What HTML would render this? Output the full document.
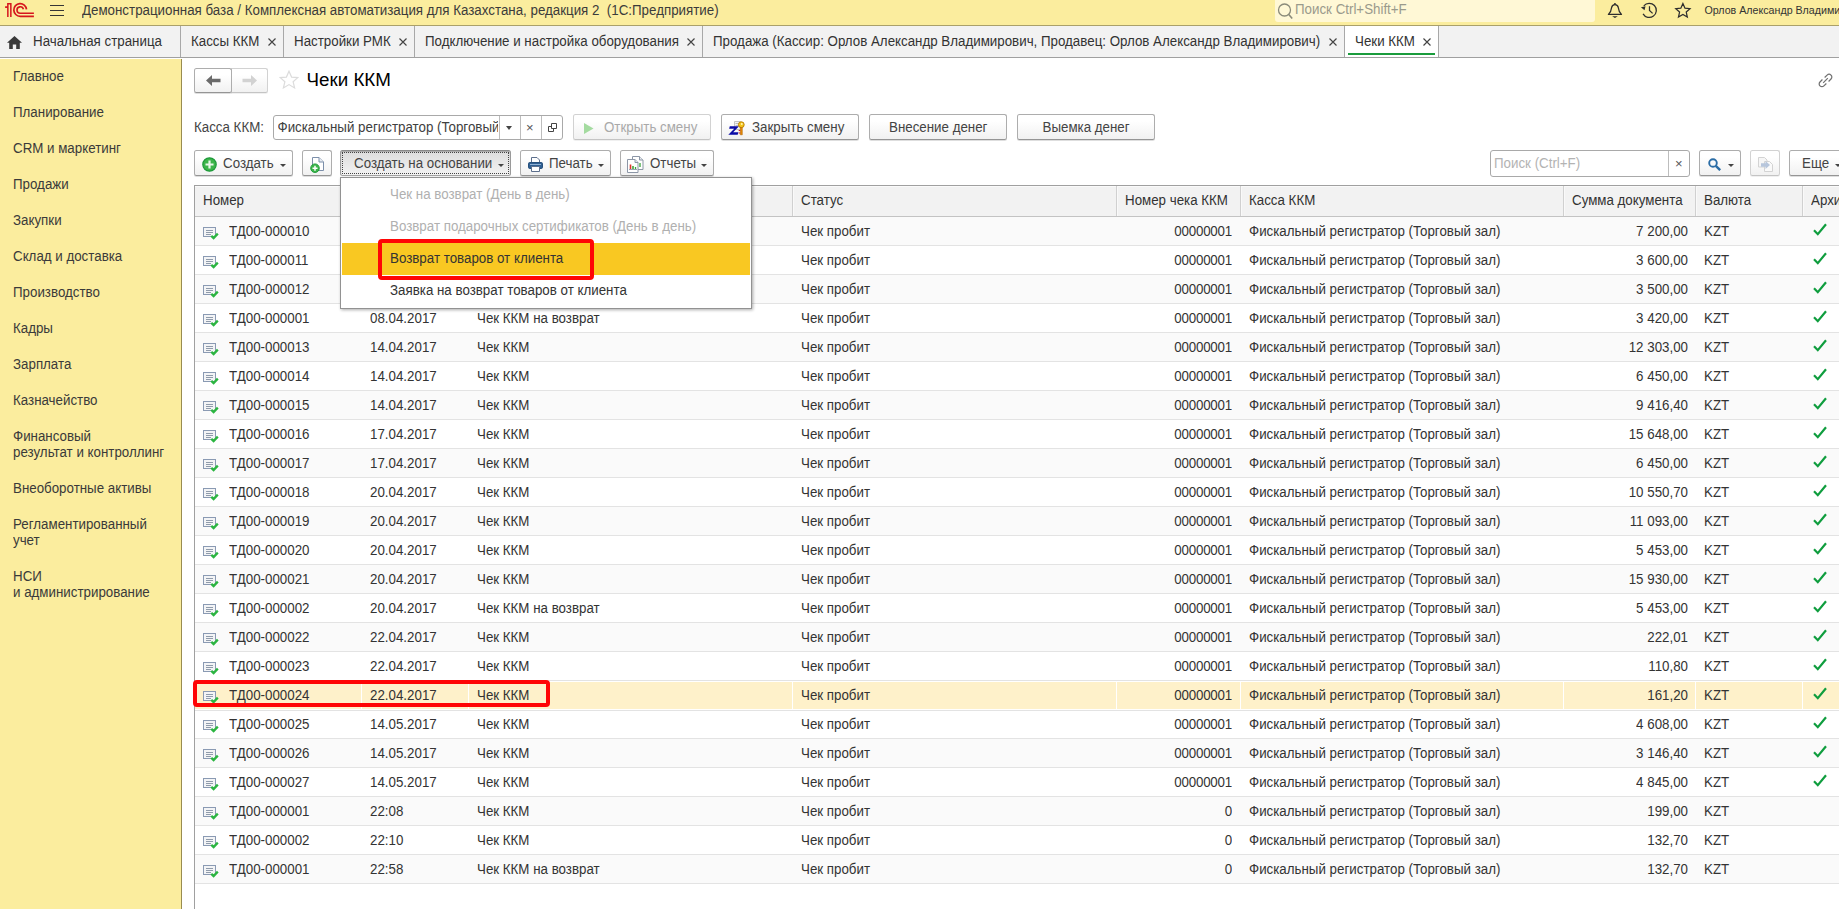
<!DOCTYPE html>
<html lang="ru"><head><meta charset="utf-8"><title>Чеки ККМ</title>
<style>
*{box-sizing:border-box;margin:0;padding:0}
html,body{width:1839px;height:909px;overflow:hidden;background:#fff}
body{font-family:"Liberation Sans",sans-serif;font-size:14px;color:#333;position:relative;-webkit-font-smoothing:antialiased}
.abs{position:absolute}
.s{display:inline-block;transform:scaleY(1.07);transform-origin:0 calc(50% + 4.6px)}
#top{position:absolute;left:0;top:0;width:1839px;height:26px;background:#fbed9e;border-bottom:1px solid #aaa06a}
#top .ttl{position:absolute;left:82px;top:2px;font-size:13.33px;line-height:18px;color:#3b3b3b;white-space:pre}
#top .srch{position:absolute;left:1275px;top:0;width:320px;height:22px;background:#fff8d6;border-radius:0 0 3px 3px}
#top .srch span{position:absolute;left:20px;top:1px;font-size:13.33px;line-height:18px;color:#9a9a8c}
#top .usr{position:absolute;left:1704.5px;top:2px;font-size:10.67px;line-height:16px;color:#333;white-space:nowrap;transform:scaleY(1.07);transform-origin:0 calc(50% + 3.7px)}
#tabs{position:absolute;left:0;top:26px;width:1839px;height:32px;background:#f2f2f2;border-bottom:1px solid #a0a0a0}
#tabs .t{position:absolute;top:0;height:31px;font-size:13.33px;line-height:31px;color:#333;white-space:nowrap;border-right:1px solid #a8a8a8}
#tabs .t .x{position:absolute;top:12px}
#tabs .t.act{background:#fff;height:31px}
#tabs .t.act i{position:absolute;left:3px;right:3px;top:27px;height:2px;background:#1a9c3c}
#side{position:absolute;left:0;top:59px;width:182px;height:850px;background:#fbed9e;border-right:1px solid #998c50}
#side div{position:absolute;left:13px;font-size:13.33px;line-height:16px;color:#3a3a3a;white-space:nowrap;transform:scaleY(1.07);transform-origin:0 calc(50% + 4.6px)}
.btn{position:absolute;height:26px;border:1px solid #adadad;border-bottom-color:#959595;border-radius:2.5px;background:linear-gradient(#fff 25%,#f1f1f1);box-shadow:0 1px 0 rgba(0,0,0,.13);font-size:13.33px;line-height:23px;color:#444;white-space:nowrap;text-align:center}
.btn.dis{color:#a9a9a9;border-color:#d2d2d2;border-bottom-color:#c4c4c4;box-shadow:0 1px 0 rgba(0,0,0,.06)}
.btn.prs{background:linear-gradient(#dcdcdc,#f3f3f3);border-color:#8a8a8a #9a9a9a #a5a5a5;box-shadow:inset 0 1px 1px rgba(0,0,0,.25)}
.btn svg{position:absolute}
.btn .tx{position:absolute;top:1px;transform:scaleY(1.07);transform-origin:0 calc(50% + 4.6px)}
.btn .ar{position:absolute;top:13px;width:0;height:0;border-left:3.5px solid transparent;border-right:3.5px solid transparent;border-top:3.5px solid #444}
.arr{display:inline-block;width:0;height:0;border-left:3.5px solid transparent;border-right:3.5px solid transparent;border-top:4px solid #444;vertical-align:middle;margin-left:7px;position:relative;top:1px}
.inp{position:absolute;height:25px;border:1px solid #a9a9a9;border-radius:3px;background:#fff;font-size:13.33px;line-height:23px;color:#404040;white-space:nowrap;overflow:hidden}
#title{position:absolute;left:306.500px;top:68px;font-size:18.8px;line-height:24px;color:#000;white-space:nowrap}
#tbl{position:absolute;left:194px;top:185px;width:1645px;height:724px;border-left:1px solid #a0a0a0;border-top:1px solid #a0a0a0}
#hdr{position:absolute;left:195px;top:186px;width:1644px;height:31px;background:#f2f2f2;border-bottom:1px solid #c3c3c3;border-top:1px solid #fafafa}
#hdr span{position:absolute;top:0;font-size:13.33px;line-height:27px;color:#333;white-space:nowrap;transform:scaleY(1.07);transform-origin:0 calc(50% + 4.6px)}
#hdr i{position:absolute;top:-1px;width:2px;height:30px;border-left:1px solid #d0d0d0;background:#f9f9f9}
#rows .r{position:absolute;left:195px;width:1644px;height:29px;border-bottom:1px solid #e3e3e3;background:#fff}
#rows .r.alt{background:#fafafa}
#rows .r.sel{background:#fff}
#rows .r.sel u{position:absolute;left:0;top:1px;width:100%;height:27px;background:#fef1ca}
#rows .w{position:absolute;left:0;top:0;width:100%;height:29px}
#rows .c{position:absolute;top:0;transform:scaleY(1.07);transform-origin:0 calc(50% + 4.6px);font-size:13.33px;line-height:30px;color:#333;white-space:nowrap;}
#rows .di{position:absolute;left:8px;top:10px}
#rows .ck{position:absolute;left:1618px;top:6px}
.c1{left:34px}.c2{left:175px}.c3{left:282px}.c4{left:606px}.c5{right:607px;letter-spacing:-.2px}.c6{left:1054px}.c7{right:151px}.c8{left:1509px}
#rows .sel b{position:absolute;top:1px;width:1px;height:27px;background:#fff}
#menu{position:absolute;left:340px;top:177px;width:412px;height:132px;background:#fff;border:1px solid #929292;box-shadow:1px 1px 3px rgba(0,0,0,.33)}
#menu div{position:absolute;left:1px;width:408px;height:32px;font-size:13.33px;line-height:32px;padding-left:48px;color:#333;white-space:nowrap}
#menu div.dis{color:#b0b0b0}
#menu div.hl{background:#f9c822}
.red{position:absolute;border:4px solid #ff0505;border-radius:4px}

</style></head>
<body>
<div id="top">
<svg class="abs" style="left:0;top:0" width="40" height="22" viewBox="0 0 40 22"><g fill="none" stroke="#d6151d" stroke-width="1.700"><path d="M7.850 17V3.700h3V17" stroke-width="1.500"/><path d="M5.100 7.100h2.800"/><path d="M26.500 9.300A6.350 6.350 0 1 0 20.150 16.300H33.900"/><path d="M23.400 9.300A3.250 3.250 0 1 0 20.150 13.300H33.900" stroke-width="1.600"/></g></svg>
<svg class="abs" style="left:50px;top:4px" width="14" height="13" viewBox="0 0 14 13"><path d="M0 1.500h14M0 6.500h14M0 11.500h14" stroke="#353535" stroke-width="1.200"/></svg>
<span class="ttl s">Демонстрационная база / Комплексная автоматизация для Казахстана, редакция 2  (1С:Предприятие)</span>
<div class="srch"><svg class="abs" style="left:2px;top:2px" width="17" height="18" viewBox="0 0 17 18"><circle cx="7.5" cy="8" r="6" fill="none" stroke="#8b8b7a" stroke-width="1.3"/><path d="M11.8 12.6l3.4 4" stroke="#8b8b7a" stroke-width="1.6"/></svg><span class="s">Поиск Ctrl+Shift+F</span></div>
<svg class="abs" style="left:1600px;top:0" width="100" height="24" viewBox="0 0 100 24"><g fill="none" stroke="#2e2e2e" stroke-width="1.250"><path d="M8.400 14.400C10.500 12.500 11.300 10.500 11.600 7.600C11.900 5.400 13.300 4.500 14.950 4.500C16.600 4.500 18 5.400 18.300 7.600C18.600 10.500 19.400 12.500 21.500 14.400Z" stroke-linejoin="round"/><path d="M14.950 3v1.500" stroke-width="1.500"/><path d="M43.800 5.800A7.100 7.100 0 1 1 43.050 13.850"/><path d="M49.500 6.200v4.200l3.100 3"/><path d="M82.90 3.50L84.96 8.17L90.03 8.68L86.23 12.08L87.31 17.07L82.90 14.50L78.49 17.07L79.57 12.08L75.77 8.68L80.84 8.17Z"/></g><path d="M12.100 16.200h5.700l-2.850 1.800z" fill="#2e2e2e"/><path d="M40.900 7.200l4.600-.9-1 4z" fill="#2e2e2e"/></svg>
<span class="usr">Орлов Александр Владимирович</span>
</div>
<div id="tabs">
<div class="t" style="left:0;width:181px;padding-left:33px"><svg class="abs" style="left:7px;top:10px" width="15" height="13" viewBox="0 0 15 13"><path d="M7.500 0L0 6.800h2.200V13h3.600V8.500h3.400V13h3.600V6.800H15z" fill="#3a3a3a"/></svg><span class="s">Начальная страница</span></div>
<div class="t" style="left:181px;width:103px;padding-left:10px"><span class="s">Кассы ККМ</span><svg class="x" style="left:86.5px" width="8" height="8" viewBox="0 0 8 8"><path d="M0.500 0.500l7 7M7.500 0.500l-7 7" stroke="#444" stroke-width="1.150" fill="none"/></svg></div>
<div class="t" style="left:284px;width:131px;padding-left:10px"><span class="s">Настройки РМК</span><svg class="x" style="left:114.5px" width="8" height="8" viewBox="0 0 8 8"><path d="M0.500 0.500l7 7M7.500 0.500l-7 7" stroke="#444" stroke-width="1.150" fill="none"/></svg></div>
<div class="t" style="left:415px;width:288px;padding-left:10px"><span class="s">Подключение и настройка оборудования</span><svg class="x" style="left:271.5px" width="8" height="8" viewBox="0 0 8 8"><path d="M0.500 0.500l7 7M7.500 0.500l-7 7" stroke="#444" stroke-width="1.150" fill="none"/></svg></div>
<div class="t" style="left:703px;width:642px;padding-left:10px"><span class="s">Продажа (Кассир: Орлов Александр Владимирович, Продавец: Орлов Александр Владимирович)</span><svg class="x" style="left:625.7px" width="8" height="8" viewBox="0 0 8 8"><path d="M0.500 0.500l7 7M7.500 0.500l-7 7" stroke="#444" stroke-width="1.150" fill="none"/></svg></div>
<div class="t act" style="left:1345px;width:94px;padding-left:10px"><span class="s">Чеки ККМ</span><svg class="x" style="left:77.7px" width="8" height="8" viewBox="0 0 8 8"><path d="M0.500 0.500l7 7M7.500 0.500l-7 7" stroke="#444" stroke-width="1.150" fill="none"/></svg><i></i></div>
</div>
<div id="side">
<div style="top:10px">Главное</div>
<div style="top:46px">Планирование</div>
<div style="top:82px">CRM и маркетинг</div>
<div style="top:118px">Продажи</div>
<div style="top:154px">Закупки</div>
<div style="top:190px">Склад и доставка</div>
<div style="top:226px">Производство</div>
<div style="top:262px">Кадры</div>
<div style="top:298px">Зарплата</div>
<div style="top:334px">Казначейство</div>
<div style="top:370px">Финансовый</div>
<div style="top:386px">результат и контроллинг</div>
<div style="top:422px">Внеоборотные активы</div>
<div style="top:458px">Регламентированный</div>
<div style="top:474px">учет</div>
<div style="top:510px">НСИ</div>
<div style="top:526px">и администрирование</div>
</div>
<div class="btn dis" style="left:231px;top:68px;width:37px;height:25px;border-radius:0 2.500px 2.500px 0"><svg style="left:10px;top:6px" width="15" height="11" viewBox="0 0 15 11"><path d="M15 5.500L9 0v3.800H0.500v3.400H9V11z" fill="#d2d2d2"/></svg></div>
<div class="btn" style="left:194px;top:68px;width:38px;height:25px"><svg style="left:11px;top:6px" width="15" height="11" viewBox="0 0 15 11"><path d="M0 5.500L6 0v3.800h8.500v3.400H6V11z" fill="#6b6b6b"/></svg></div>
<svg class="abs" style="left:279px;top:70px" width="20" height="19" viewBox="0 0 20 19"><path d="M10 1.200l2.600 5.900 6.200.5-4.700 4.100 1.500 6.200L10 14.600 4.400 17.900l1.500-6.200L1.200 7.600l6.200-.5z" fill="none" stroke="#dcdcdc" stroke-width="1.200"/></svg>
<div id="title">Чеки ККМ</div>
<svg class="abs" style="left:1817px;top:72px" width="17" height="17" viewBox="0 0 16 16"><g fill="none" stroke="#707070" stroke-width="1.150"><path d="M5.800 10.200l4.400-4.400"/><path d="M7.200 5.200l2.300-2.300a2.600 2.600 0 0 1 3.700 3.700l-2.300 2.300"/><path d="M8.800 10.800l-2.300 2.300a2.600 2.600 0 0 1-3.700-3.700l2.300-2.300"/></g></svg>
<div class="abs s" style="left:194px;top:120px;font-size:13.33px;line-height:16px;color:#444">Касса ККМ:</div>
<div class="inp" style="left:273px;top:115px;width:290px"><span class="abs s" style="left:3.500px;top:0;width:220px;overflow:hidden">Фискальный регистратор (Торговый зал)</span>
<i class="abs" style="left:225px;top:0;width:1px;height:23px;background:#bdbdbd"></i><i class="abs" style="left:246px;top:0;width:1px;height:23px;background:#bdbdbd"></i><i class="abs" style="left:267px;top:0;width:1px;height:23px;background:#bdbdbd"></i>
<i class="abs" style="left:232px;top:10px;width:0;height:0;border-left:3.500px solid transparent;border-right:3.500px solid transparent;border-top:4px solid #444"></i>
<span class="abs" style="left:252px;top:0;font-size:13px;color:#555">×</span>
<svg class="abs" style="left:274px;top:7px" width="9" height="9" viewBox="0 0 9 9"><path d="M3.500 0.500h5v5h-5z" fill="#fff" stroke="#444"/><path d="M3.500 3.500h-3v5h5v-3" fill="none" stroke="#444"/></svg>
</div>
<div class="btn dis" style="left:573px;top:114px;width:138px"><svg style="left:10px;top:8px" width="10" height="11" viewBox="0 0 10 11"><path d="M0 0l9.500 5.500L0 11z" fill="#a4dba0"/></svg><span class="tx" style="left:30px">Открыть смену</span></div>
<div class="btn" style="left:721px;top:114px;width:138px"><svg style="left:6px;top:6px" width="17" height="15" viewBox="0 0 17 15"><path d="M6.500 0.500h6v8h-6z" fill="#f4f4f4" stroke="#b5b5b5" stroke-width=".8"/><path d="M7.500 2.500h3M7.500 4.500h3" stroke="#b0b0b0" stroke-width=".8"/><path d="M1.800 5.200h9.200l-5.800 6h5.200l-.7 2.600H0.300l5.900-6.100H1.100z" fill="#0b0ba6"/><circle cx="13.300" cy="3.700" r="2.900" fill="#f5c518" stroke="#b47a00" stroke-width=".9"/><circle cx="13.800" cy="3" r=".9" fill="#fff6c0"/><path d="M12.300 6.500h2v7.300h-2z" fill="#e58a00" stroke="#a85f00" stroke-width=".5"/><path d="M12.300 9.500h-1.600M12.300 12h-1.600" stroke="#d21f1f" stroke-width="1.200"/></svg><span class="tx" style="left:30px">Закрыть смену</span></div>
<div class="btn" style="left:869px;top:114px;width:138px"><span class="tx" style="left:19px">Внесение денег</span></div>
<div class="btn" style="left:1017px;top:114px;width:138px"><span class="tx" style="left:24.5px">Выемка денег</span></div>

<div class="btn" style="left:194px;top:150px;width:99px"><svg style="left:7px;top:6px" width="15" height="15" viewBox="0 0 15 15"><circle cx="7.500" cy="7.500" r="6.700" fill="#3cb54a" stroke="#1e9a3a" stroke-width="1.200"/><path d="M7.500 3.500v8M3.500 7.500h8" stroke="#e9f7ea" stroke-width="2.200"/></svg><span class="tx" style="left:28px">Создать</span><i class="ar" style="left:85px"></i></div>
<div class="btn" style="left:302px;top:150px;width:30px"><svg style="left:6.500px;top:5.500px" width="15" height="16" viewBox="0 0 15 16"><path d="M2.500 0.500h6.500l4.500 4.500v8.500h-11z" fill="#fff" stroke="#7c8faa"/><path d="M9 0.500v4.500h4.500" fill="#e8ecf2" stroke="#7c8faa"/><circle cx="5" cy="11.200" r="4.300" fill="#3cb54a" stroke="#1e9a3a" stroke-width=".9"/><path d="M5 8.700v5M2.500 11.200h5" stroke="#fff" stroke-width="1.500"/></svg></div>
<div class="btn prs" style="left:340px;top:150px;width:171px"><i class="abs" style="left:1px;top:1px;right:1px;bottom:1px;border:1px dotted #444"></i><span class="tx" style="left:13px">Создать на основании</span><i class="ar" style="left:157px"></i></div>
<div class="btn" style="left:520px;top:150px;width:91px"><svg style="left:7px;top:6px" width="15" height="15" viewBox="0 0 15 15"><path d="M3.500 0.500h5.500l2.500 2.500v3h-8z" fill="#fff" stroke="#5c6f8c"/><rect x="0.500" y="5.500" width="14" height="6" rx="1.200" fill="#2f5f92" stroke="#27507c"/><path d="M2 7.500h11" stroke="#8fb0d3" stroke-width="1"/><path d="M3.500 9.500h8v5h-8z" fill="#fff" stroke="#5c6f8c"/></svg><span class="tx" style="left:28px">Печать</span><i class="ar" style="left:77px"></i></div>
<div class="btn" style="left:620px;top:150px;width:94px"><svg style="left:6px;top:5px" width="17" height="17" viewBox="0 0 17 17"><path d="M5.500 0.500h7l3.500 3.500v9.500h-10.500z" fill="#fff" stroke="#8c96a6"/><path d="M12.500 0.500v3.500h3.500" fill="#e6e9ee" stroke="#8c96a6"/><path d="M0.500 3.500h7.500l3 3v10h-10.500z" fill="#fff" stroke="#8c96a6"/><path d="M8 3.500v3h3" fill="#e6e9ee" stroke="#8c96a6"/><path d="M3.500 13.500v-5" stroke="#e0362c" stroke-width="1.600"/><path d="M6 13.500v-3.500" stroke="#3aa53a" stroke-width="1.600"/><path d="M8.500 13.500v-2.500" stroke="#3aa53a" stroke-width="1.300"/><path d="M13 11v-4" stroke="#3aa53a" stroke-width="1.300"/><path d="M2 13.500h8" stroke="#9aa3b0" stroke-width="1"/></svg><span class="tx" style="left:29px">Отчеты</span><i class="ar" style="left:80px"></i></div>

<div class="inp" style="left:1490px;top:150px;width:200px;height:27px;line-height:25px"><span class="abs s" style="left:3px;top:0;color:#b3b3b3">Поиск (Ctrl+F)</span><i class="abs" style="left:177px;top:0;width:1px;height:25px;background:#bdbdbd"></i><span class="abs" style="left:184px;top:0;font-size:13px;color:#555">×</span></div>
<div class="btn" style="left:1699px;top:150px;width:42px"><svg style="left:8px;top:7px" width="14" height="13" viewBox="0 0 14 13"><circle cx="5" cy="5" r="3.800" fill="none" stroke="#2b6da6" stroke-width="1.900"/><path d="M7.800 7.800l4.400 4.400" stroke="#2b6da6" stroke-width="2.400"/></svg><i class="ar" style="left:28px"></i></div>
<div class="btn dis" style="left:1750px;top:150px;width:30px"><svg style="left:7px;top:6px" width="15" height="15" viewBox="0 0 15 15"><path d="M0.500 0.500h6l2.500 2.500v7h-8.500z" fill="#f6f6f6" stroke="#d3d3d3"/><path d="M6.500 4.500h5l3 3v7h-8z" fill="#fafafa" stroke="#d3d3d3"/><path d="M3 6.300h4.500V4l4.500 4-4.500 4V9.700H3z" fill="#b7c6dc"/></svg></div>
<div class="btn" style="left:1789px;top:150px;width:60px"><span class="tx" style="left:12px">Еще</span><i class="ar" style="left:45px"></i></div>

<div id="tbl"></div>
<div id="hdr"><span style="left:8px">Номер</span><i style="left:166px"></i><i style="left:273px"></i><i style="left:597px"></i><span style="left:606px">Статус</span><i style="left:921px"></i><span style="left:930px">Номер чека ККМ</span><i style="left:1045px"></i><span style="left:1054px">Касса ККМ</span><i style="left:1368px"></i><span style="left:1377px">Сумма документа</span><i style="left:1500px"></i><span style="left:1509px">Валюта</span><i style="left:1607px"></i><span style="left:1616px">Архив</span></div>

<div id="rows">
<div class="r alt" style="top:217px"><div class="w"><svg class="di" width="16" height="13" viewBox="0 0 16 13"><rect x="0.5" y="0.5" width="12" height="9" fill="#f3f4f6" stroke="#8a9ab3"/><path d="M3 3.500h7M3 5.500h7M3 7.500h5" stroke="#8f9bab" stroke-width="1"/><path d="M8.300 8.800l2.300 2.200L14.800 6.600" fill="none" stroke="#2bb540" stroke-width="2.300"/></svg><span class="c c1">ТД00-000010</span><span class="c c2"></span><span class="c c3"></span><span class="c c4">Чек пробит</span><span class="c c5">00000001</span><span class="c c6">Фискальный регистратор (Торговый зал)</span><span class="c c7">7 200,00</span><span class="c c8">KZT</span><svg class="ck" width="14" height="13" viewBox="0 0 14 13"><path d="M1 7.2l3.8 4L13 1.2" fill="none" stroke="#0f9d3e" stroke-width="2.2"/></svg></div></div>
<div class="r" style="top:246px"><div class="w"><svg class="di" width="16" height="13" viewBox="0 0 16 13"><rect x="0.5" y="0.5" width="12" height="9" fill="#f3f4f6" stroke="#8a9ab3"/><path d="M3 3.500h7M3 5.500h7M3 7.500h5" stroke="#8f9bab" stroke-width="1"/><path d="M8.300 8.800l2.300 2.200L14.800 6.600" fill="none" stroke="#2bb540" stroke-width="2.300"/></svg><span class="c c1">ТД00-000011</span><span class="c c2"></span><span class="c c3"></span><span class="c c4">Чек пробит</span><span class="c c5">00000001</span><span class="c c6">Фискальный регистратор (Торговый зал)</span><span class="c c7">3 600,00</span><span class="c c8">KZT</span><svg class="ck" width="14" height="13" viewBox="0 0 14 13"><path d="M1 7.2l3.8 4L13 1.2" fill="none" stroke="#0f9d3e" stroke-width="2.2"/></svg></div></div>
<div class="r alt" style="top:275px"><div class="w"><svg class="di" width="16" height="13" viewBox="0 0 16 13"><rect x="0.5" y="0.5" width="12" height="9" fill="#f3f4f6" stroke="#8a9ab3"/><path d="M3 3.500h7M3 5.500h7M3 7.500h5" stroke="#8f9bab" stroke-width="1"/><path d="M8.300 8.800l2.300 2.200L14.800 6.600" fill="none" stroke="#2bb540" stroke-width="2.300"/></svg><span class="c c1">ТД00-000012</span><span class="c c2"></span><span class="c c3"></span><span class="c c4">Чек пробит</span><span class="c c5">00000001</span><span class="c c6">Фискальный регистратор (Торговый зал)</span><span class="c c7">3 500,00</span><span class="c c8">KZT</span><svg class="ck" width="14" height="13" viewBox="0 0 14 13"><path d="M1 7.2l3.8 4L13 1.2" fill="none" stroke="#0f9d3e" stroke-width="2.2"/></svg></div></div>
<div class="r" style="top:304px"><div class="w"><svg class="di" width="16" height="13" viewBox="0 0 16 13"><rect x="0.5" y="0.5" width="12" height="9" fill="#f3f4f6" stroke="#8a9ab3"/><path d="M3 3.500h7M3 5.500h7M3 7.500h5" stroke="#8f9bab" stroke-width="1"/><path d="M8.300 8.800l2.300 2.200L14.800 6.600" fill="none" stroke="#2bb540" stroke-width="2.300"/></svg><span class="c c1">ТД00-000001</span><span class="c c2">08.04.2017</span><span class="c c3">Чек ККМ на возврат</span><span class="c c4">Чек пробит</span><span class="c c5">00000001</span><span class="c c6">Фискальный регистратор (Торговый зал)</span><span class="c c7">3 420,00</span><span class="c c8">KZT</span><svg class="ck" width="14" height="13" viewBox="0 0 14 13"><path d="M1 7.2l3.8 4L13 1.2" fill="none" stroke="#0f9d3e" stroke-width="2.2"/></svg></div></div>
<div class="r alt" style="top:333px"><div class="w"><svg class="di" width="16" height="13" viewBox="0 0 16 13"><rect x="0.5" y="0.5" width="12" height="9" fill="#f3f4f6" stroke="#8a9ab3"/><path d="M3 3.500h7M3 5.500h7M3 7.500h5" stroke="#8f9bab" stroke-width="1"/><path d="M8.300 8.800l2.300 2.200L14.800 6.600" fill="none" stroke="#2bb540" stroke-width="2.300"/></svg><span class="c c1">ТД00-000013</span><span class="c c2">14.04.2017</span><span class="c c3">Чек ККМ</span><span class="c c4">Чек пробит</span><span class="c c5">00000001</span><span class="c c6">Фискальный регистратор (Торговый зал)</span><span class="c c7">12 303,00</span><span class="c c8">KZT</span><svg class="ck" width="14" height="13" viewBox="0 0 14 13"><path d="M1 7.2l3.8 4L13 1.2" fill="none" stroke="#0f9d3e" stroke-width="2.2"/></svg></div></div>
<div class="r" style="top:362px"><div class="w"><svg class="di" width="16" height="13" viewBox="0 0 16 13"><rect x="0.5" y="0.5" width="12" height="9" fill="#f3f4f6" stroke="#8a9ab3"/><path d="M3 3.500h7M3 5.500h7M3 7.500h5" stroke="#8f9bab" stroke-width="1"/><path d="M8.300 8.800l2.300 2.200L14.800 6.600" fill="none" stroke="#2bb540" stroke-width="2.300"/></svg><span class="c c1">ТД00-000014</span><span class="c c2">14.04.2017</span><span class="c c3">Чек ККМ</span><span class="c c4">Чек пробит</span><span class="c c5">00000001</span><span class="c c6">Фискальный регистратор (Торговый зал)</span><span class="c c7">6 450,00</span><span class="c c8">KZT</span><svg class="ck" width="14" height="13" viewBox="0 0 14 13"><path d="M1 7.2l3.8 4L13 1.2" fill="none" stroke="#0f9d3e" stroke-width="2.2"/></svg></div></div>
<div class="r alt" style="top:391px"><div class="w"><svg class="di" width="16" height="13" viewBox="0 0 16 13"><rect x="0.5" y="0.5" width="12" height="9" fill="#f3f4f6" stroke="#8a9ab3"/><path d="M3 3.500h7M3 5.500h7M3 7.500h5" stroke="#8f9bab" stroke-width="1"/><path d="M8.300 8.800l2.300 2.200L14.800 6.600" fill="none" stroke="#2bb540" stroke-width="2.300"/></svg><span class="c c1">ТД00-000015</span><span class="c c2">14.04.2017</span><span class="c c3">Чек ККМ</span><span class="c c4">Чек пробит</span><span class="c c5">00000001</span><span class="c c6">Фискальный регистратор (Торговый зал)</span><span class="c c7">9 416,40</span><span class="c c8">KZT</span><svg class="ck" width="14" height="13" viewBox="0 0 14 13"><path d="M1 7.2l3.8 4L13 1.2" fill="none" stroke="#0f9d3e" stroke-width="2.2"/></svg></div></div>
<div class="r" style="top:420px"><div class="w"><svg class="di" width="16" height="13" viewBox="0 0 16 13"><rect x="0.5" y="0.5" width="12" height="9" fill="#f3f4f6" stroke="#8a9ab3"/><path d="M3 3.500h7M3 5.500h7M3 7.500h5" stroke="#8f9bab" stroke-width="1"/><path d="M8.300 8.800l2.300 2.200L14.800 6.600" fill="none" stroke="#2bb540" stroke-width="2.300"/></svg><span class="c c1">ТД00-000016</span><span class="c c2">17.04.2017</span><span class="c c3">Чек ККМ</span><span class="c c4">Чек пробит</span><span class="c c5">00000001</span><span class="c c6">Фискальный регистратор (Торговый зал)</span><span class="c c7">15 648,00</span><span class="c c8">KZT</span><svg class="ck" width="14" height="13" viewBox="0 0 14 13"><path d="M1 7.2l3.8 4L13 1.2" fill="none" stroke="#0f9d3e" stroke-width="2.2"/></svg></div></div>
<div class="r alt" style="top:449px"><div class="w"><svg class="di" width="16" height="13" viewBox="0 0 16 13"><rect x="0.5" y="0.5" width="12" height="9" fill="#f3f4f6" stroke="#8a9ab3"/><path d="M3 3.500h7M3 5.500h7M3 7.500h5" stroke="#8f9bab" stroke-width="1"/><path d="M8.300 8.800l2.300 2.200L14.800 6.600" fill="none" stroke="#2bb540" stroke-width="2.300"/></svg><span class="c c1">ТД00-000017</span><span class="c c2">17.04.2017</span><span class="c c3">Чек ККМ</span><span class="c c4">Чек пробит</span><span class="c c5">00000001</span><span class="c c6">Фискальный регистратор (Торговый зал)</span><span class="c c7">6 450,00</span><span class="c c8">KZT</span><svg class="ck" width="14" height="13" viewBox="0 0 14 13"><path d="M1 7.2l3.8 4L13 1.2" fill="none" stroke="#0f9d3e" stroke-width="2.2"/></svg></div></div>
<div class="r" style="top:478px"><div class="w"><svg class="di" width="16" height="13" viewBox="0 0 16 13"><rect x="0.5" y="0.5" width="12" height="9" fill="#f3f4f6" stroke="#8a9ab3"/><path d="M3 3.500h7M3 5.500h7M3 7.500h5" stroke="#8f9bab" stroke-width="1"/><path d="M8.300 8.800l2.300 2.200L14.800 6.600" fill="none" stroke="#2bb540" stroke-width="2.300"/></svg><span class="c c1">ТД00-000018</span><span class="c c2">20.04.2017</span><span class="c c3">Чек ККМ</span><span class="c c4">Чек пробит</span><span class="c c5">00000001</span><span class="c c6">Фискальный регистратор (Торговый зал)</span><span class="c c7">10 550,70</span><span class="c c8">KZT</span><svg class="ck" width="14" height="13" viewBox="0 0 14 13"><path d="M1 7.2l3.8 4L13 1.2" fill="none" stroke="#0f9d3e" stroke-width="2.2"/></svg></div></div>
<div class="r alt" style="top:507px"><div class="w"><svg class="di" width="16" height="13" viewBox="0 0 16 13"><rect x="0.5" y="0.5" width="12" height="9" fill="#f3f4f6" stroke="#8a9ab3"/><path d="M3 3.500h7M3 5.500h7M3 7.500h5" stroke="#8f9bab" stroke-width="1"/><path d="M8.300 8.800l2.300 2.200L14.800 6.600" fill="none" stroke="#2bb540" stroke-width="2.300"/></svg><span class="c c1">ТД00-000019</span><span class="c c2">20.04.2017</span><span class="c c3">Чек ККМ</span><span class="c c4">Чек пробит</span><span class="c c5">00000001</span><span class="c c6">Фискальный регистратор (Торговый зал)</span><span class="c c7">11 093,00</span><span class="c c8">KZT</span><svg class="ck" width="14" height="13" viewBox="0 0 14 13"><path d="M1 7.2l3.8 4L13 1.2" fill="none" stroke="#0f9d3e" stroke-width="2.2"/></svg></div></div>
<div class="r" style="top:536px"><div class="w"><svg class="di" width="16" height="13" viewBox="0 0 16 13"><rect x="0.5" y="0.5" width="12" height="9" fill="#f3f4f6" stroke="#8a9ab3"/><path d="M3 3.500h7M3 5.500h7M3 7.500h5" stroke="#8f9bab" stroke-width="1"/><path d="M8.300 8.800l2.300 2.200L14.800 6.600" fill="none" stroke="#2bb540" stroke-width="2.300"/></svg><span class="c c1">ТД00-000020</span><span class="c c2">20.04.2017</span><span class="c c3">Чек ККМ</span><span class="c c4">Чек пробит</span><span class="c c5">00000001</span><span class="c c6">Фискальный регистратор (Торговый зал)</span><span class="c c7">5 453,00</span><span class="c c8">KZT</span><svg class="ck" width="14" height="13" viewBox="0 0 14 13"><path d="M1 7.2l3.8 4L13 1.2" fill="none" stroke="#0f9d3e" stroke-width="2.2"/></svg></div></div>
<div class="r alt" style="top:565px"><div class="w"><svg class="di" width="16" height="13" viewBox="0 0 16 13"><rect x="0.5" y="0.5" width="12" height="9" fill="#f3f4f6" stroke="#8a9ab3"/><path d="M3 3.500h7M3 5.500h7M3 7.500h5" stroke="#8f9bab" stroke-width="1"/><path d="M8.300 8.800l2.300 2.200L14.800 6.600" fill="none" stroke="#2bb540" stroke-width="2.300"/></svg><span class="c c1">ТД00-000021</span><span class="c c2">20.04.2017</span><span class="c c3">Чек ККМ</span><span class="c c4">Чек пробит</span><span class="c c5">00000001</span><span class="c c6">Фискальный регистратор (Торговый зал)</span><span class="c c7">15 930,00</span><span class="c c8">KZT</span><svg class="ck" width="14" height="13" viewBox="0 0 14 13"><path d="M1 7.2l3.8 4L13 1.2" fill="none" stroke="#0f9d3e" stroke-width="2.2"/></svg></div></div>
<div class="r" style="top:594px"><div class="w"><svg class="di" width="16" height="13" viewBox="0 0 16 13"><rect x="0.5" y="0.5" width="12" height="9" fill="#f3f4f6" stroke="#8a9ab3"/><path d="M3 3.500h7M3 5.500h7M3 7.500h5" stroke="#8f9bab" stroke-width="1"/><path d="M8.300 8.800l2.300 2.200L14.800 6.600" fill="none" stroke="#2bb540" stroke-width="2.300"/></svg><span class="c c1">ТД00-000002</span><span class="c c2">20.04.2017</span><span class="c c3">Чек ККМ на возврат</span><span class="c c4">Чек пробит</span><span class="c c5">00000001</span><span class="c c6">Фискальный регистратор (Торговый зал)</span><span class="c c7">5 453,00</span><span class="c c8">KZT</span><svg class="ck" width="14" height="13" viewBox="0 0 14 13"><path d="M1 7.2l3.8 4L13 1.2" fill="none" stroke="#0f9d3e" stroke-width="2.2"/></svg></div></div>
<div class="r alt" style="top:623px"><div class="w"><svg class="di" width="16" height="13" viewBox="0 0 16 13"><rect x="0.5" y="0.5" width="12" height="9" fill="#f3f4f6" stroke="#8a9ab3"/><path d="M3 3.500h7M3 5.500h7M3 7.500h5" stroke="#8f9bab" stroke-width="1"/><path d="M8.300 8.800l2.300 2.200L14.800 6.600" fill="none" stroke="#2bb540" stroke-width="2.300"/></svg><span class="c c1">ТД00-000022</span><span class="c c2">22.04.2017</span><span class="c c3">Чек ККМ</span><span class="c c4">Чек пробит</span><span class="c c5">00000001</span><span class="c c6">Фискальный регистратор (Торговый зал)</span><span class="c c7">222,01</span><span class="c c8">KZT</span><svg class="ck" width="14" height="13" viewBox="0 0 14 13"><path d="M1 7.2l3.8 4L13 1.2" fill="none" stroke="#0f9d3e" stroke-width="2.2"/></svg></div></div>
<div class="r" style="top:652px"><div class="w"><svg class="di" width="16" height="13" viewBox="0 0 16 13"><rect x="0.5" y="0.5" width="12" height="9" fill="#f3f4f6" stroke="#8a9ab3"/><path d="M3 3.500h7M3 5.500h7M3 7.500h5" stroke="#8f9bab" stroke-width="1"/><path d="M8.300 8.800l2.300 2.200L14.800 6.600" fill="none" stroke="#2bb540" stroke-width="2.300"/></svg><span class="c c1">ТД00-000023</span><span class="c c2">22.04.2017</span><span class="c c3">Чек ККМ</span><span class="c c4">Чек пробит</span><span class="c c5">00000001</span><span class="c c6">Фискальный регистратор (Торговый зал)</span><span class="c c7">110,80</span><span class="c c8">KZT</span><svg class="ck" width="14" height="13" viewBox="0 0 14 13"><path d="M1 7.2l3.8 4L13 1.2" fill="none" stroke="#0f9d3e" stroke-width="2.2"/></svg></div></div>
<div class="r alt sel" style="top:681px;height:30px"><div class="w"><u></u><svg class="di" width="16" height="13" viewBox="0 0 16 13"><rect x="0.5" y="0.5" width="12" height="9" fill="#f3f4f6" stroke="#8a9ab3"/><path d="M3 3.500h7M3 5.500h7M3 7.500h5" stroke="#8f9bab" stroke-width="1"/><path d="M8.300 8.800l2.300 2.200L14.800 6.600" fill="none" stroke="#2bb540" stroke-width="2.300"/></svg><span class="c c1">ТД00-000024</span><span class="c c2">22.04.2017</span><span class="c c3">Чек ККМ</span><span class="c c4">Чек пробит</span><span class="c c5">00000001</span><span class="c c6">Фискальный регистратор (Торговый зал)</span><span class="c c7">161,20</span><span class="c c8">KZT</span><svg class="ck" width="14" height="13" viewBox="0 0 14 13"><path d="M1 7.2l3.8 4L13 1.2" fill="none" stroke="#0f9d3e" stroke-width="2.2"/></svg><b style="left:166px"></b><b style="left:273px"></b><b style="left:597px"></b><b style="left:921px"></b><b style="left:1045px"></b><b style="left:1368px"></b><b style="left:1500px"></b><b style="left:1607px"></b></div></div>
<div class="r" style="top:711px;height:28px"><div class="w" style="top:-1px"><svg class="di" width="16" height="13" viewBox="0 0 16 13"><rect x="0.5" y="0.5" width="12" height="9" fill="#f3f4f6" stroke="#8a9ab3"/><path d="M3 3.500h7M3 5.500h7M3 7.500h5" stroke="#8f9bab" stroke-width="1"/><path d="M8.300 8.800l2.300 2.200L14.800 6.600" fill="none" stroke="#2bb540" stroke-width="2.300"/></svg><span class="c c1">ТД00-000025</span><span class="c c2">14.05.2017</span><span class="c c3">Чек ККМ</span><span class="c c4">Чек пробит</span><span class="c c5">00000001</span><span class="c c6">Фискальный регистратор (Торговый зал)</span><span class="c c7">4 608,00</span><span class="c c8">KZT</span><svg class="ck" width="14" height="13" viewBox="0 0 14 13"><path d="M1 7.2l3.8 4L13 1.2" fill="none" stroke="#0f9d3e" stroke-width="2.2"/></svg></div></div>
<div class="r alt" style="top:739px"><div class="w"><svg class="di" width="16" height="13" viewBox="0 0 16 13"><rect x="0.5" y="0.5" width="12" height="9" fill="#f3f4f6" stroke="#8a9ab3"/><path d="M3 3.500h7M3 5.500h7M3 7.500h5" stroke="#8f9bab" stroke-width="1"/><path d="M8.300 8.800l2.300 2.200L14.800 6.600" fill="none" stroke="#2bb540" stroke-width="2.300"/></svg><span class="c c1">ТД00-000026</span><span class="c c2">14.05.2017</span><span class="c c3">Чек ККМ</span><span class="c c4">Чек пробит</span><span class="c c5">00000001</span><span class="c c6">Фискальный регистратор (Торговый зал)</span><span class="c c7">3 146,40</span><span class="c c8">KZT</span><svg class="ck" width="14" height="13" viewBox="0 0 14 13"><path d="M1 7.2l3.8 4L13 1.2" fill="none" stroke="#0f9d3e" stroke-width="2.2"/></svg></div></div>
<div class="r" style="top:768px"><div class="w"><svg class="di" width="16" height="13" viewBox="0 0 16 13"><rect x="0.5" y="0.5" width="12" height="9" fill="#f3f4f6" stroke="#8a9ab3"/><path d="M3 3.500h7M3 5.500h7M3 7.500h5" stroke="#8f9bab" stroke-width="1"/><path d="M8.300 8.800l2.300 2.200L14.800 6.600" fill="none" stroke="#2bb540" stroke-width="2.300"/></svg><span class="c c1">ТД00-000027</span><span class="c c2">14.05.2017</span><span class="c c3">Чек ККМ</span><span class="c c4">Чек пробит</span><span class="c c5">00000001</span><span class="c c6">Фискальный регистратор (Торговый зал)</span><span class="c c7">4 845,00</span><span class="c c8">KZT</span><svg class="ck" width="14" height="13" viewBox="0 0 14 13"><path d="M1 7.2l3.8 4L13 1.2" fill="none" stroke="#0f9d3e" stroke-width="2.2"/></svg></div></div>
<div class="r alt" style="top:797px"><div class="w"><svg class="di" width="16" height="13" viewBox="0 0 16 13"><rect x="0.5" y="0.5" width="12" height="9" fill="#f3f4f6" stroke="#8a9ab3"/><path d="M3 3.500h7M3 5.500h7M3 7.500h5" stroke="#8f9bab" stroke-width="1"/><path d="M8.300 8.800l2.300 2.200L14.800 6.600" fill="none" stroke="#2bb540" stroke-width="2.300"/></svg><span class="c c1">ТД00-000001</span><span class="c c2">22:08</span><span class="c c3">Чек ККМ</span><span class="c c4">Чек пробит</span><span class="c c5">0</span><span class="c c6">Фискальный регистратор (Торговый зал)</span><span class="c c7">199,00</span><span class="c c8">KZT</span></div></div>
<div class="r" style="top:826px"><div class="w"><svg class="di" width="16" height="13" viewBox="0 0 16 13"><rect x="0.5" y="0.5" width="12" height="9" fill="#f3f4f6" stroke="#8a9ab3"/><path d="M3 3.500h7M3 5.500h7M3 7.500h5" stroke="#8f9bab" stroke-width="1"/><path d="M8.300 8.800l2.300 2.200L14.800 6.600" fill="none" stroke="#2bb540" stroke-width="2.300"/></svg><span class="c c1">ТД00-000002</span><span class="c c2">22:10</span><span class="c c3">Чек ККМ</span><span class="c c4">Чек пробит</span><span class="c c5">0</span><span class="c c6">Фискальный регистратор (Торговый зал)</span><span class="c c7">132,70</span><span class="c c8">KZT</span></div></div>
<div class="r alt" style="top:855px"><div class="w"><svg class="di" width="16" height="13" viewBox="0 0 16 13"><rect x="0.5" y="0.5" width="12" height="9" fill="#f3f4f6" stroke="#8a9ab3"/><path d="M3 3.500h7M3 5.500h7M3 7.500h5" stroke="#8f9bab" stroke-width="1"/><path d="M8.300 8.800l2.300 2.200L14.800 6.600" fill="none" stroke="#2bb540" stroke-width="2.300"/></svg><span class="c c1">ТД00-000001</span><span class="c c2">22:58</span><span class="c c3">Чек ККМ на возврат</span><span class="c c4">Чек пробит</span><span class="c c5">0</span><span class="c c6">Фискальный регистратор (Торговый зал)</span><span class="c c7">132,70</span><span class="c c8">KZT</span></div></div>
</div>
<div id="menu">
<div class="dis" style="top:1px"><span class="s">Чек на возврат (День в день)</span></div>
<div class="dis" style="top:33px"><span class="s">Возврат подарочных сертификатов (День в день)</span></div>
<div class="hl" style="top:65px"><span class="s">Возврат товаров от клиента</span></div>
<div style="top:97px"><span class="s">Заявка на возврат товаров от клиента</span></div>
</div>
<div class="red" style="left:378px;top:239px;width:216px;height:41px"></div>
<div class="red" style="left:193px;top:680px;width:357px;height:27px"></div>

</body></html>
